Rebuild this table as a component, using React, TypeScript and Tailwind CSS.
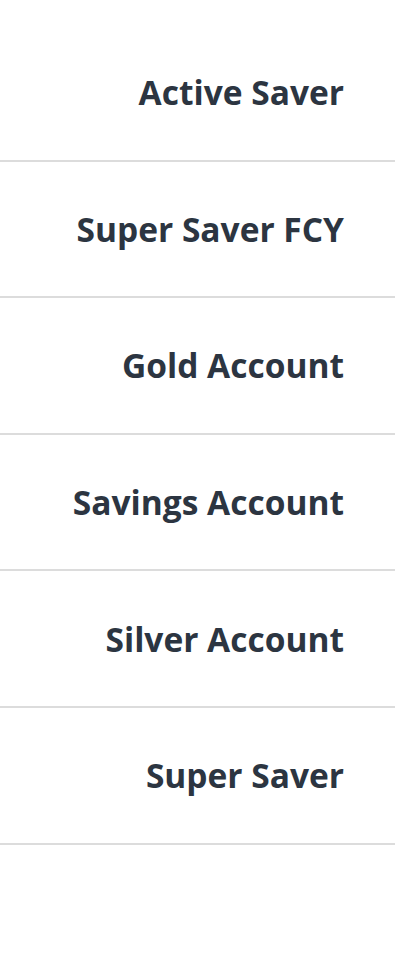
const accounts = ["Active Saver", "Super Saver FCY", "Gold Account", "Savings Account", "Silver Account", "Super Saver"]

const App = () => {
    return (
        <div className="min-h-[960px] bg-white pt-[25px] pr-[5px]" style={{ fontFamily: '"Open Sans", sans-serif' }}>
            {accounts.map((name) => (
                <div key={name} className="h-[136.6px] flex items-center justify-end pr-[51px] border-b-2 border-[#dcdcdc]">
                    <span className="text-[33.5px] font-bold text-[#2c3541]">{name}</span>
                </div>
            ))}
        </div>
    )
}

export default App
